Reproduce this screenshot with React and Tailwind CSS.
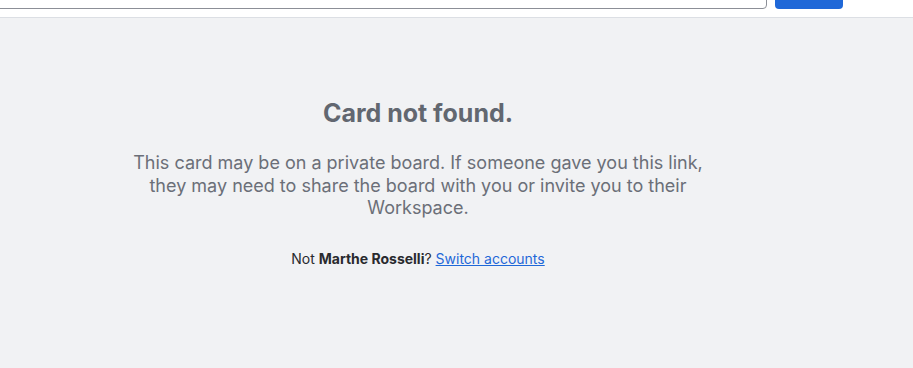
import React from 'react';

export default function App() {
    return (
        <div className="w-[913px] h-[368px] overflow-hidden bg-[#f1f2f4] font-['Inter',sans-serif]">
            {/* Header, scrolled partly out of view */}
            <div className="h-[18px] bg-white border-b border-[#dcdfe4] flex items-end pb-[8px] overflow-hidden">
                <div className="flex items-end gap-2">
                    <div className="-ml-3 w-[779px] h-[36px] rounded-[4px] border border-[#8c8f97] bg-white" />
                    <div className="w-[68px] h-[36px] rounded-[4px] bg-[#1f68d8]" />
                </div>
            </div>

            {/* Body */}
            <div className="flex pr-[77px]">
                <div className="flex-1 flex flex-col items-center text-center pt-[80px]">
                    <h1 className="text-[25px] leading-[30px] font-bold text-[#626770]">Card not found.</h1>
                    <p className="mt-[24px] w-[580px] text-[18px] leading-[22.5px] text-[#6b6f78]">
                        This card may be on a private board. If someone gave you this link, they may need to share the board with you or invite you to their Workspace.
                    </p>
                    <p className="mt-[29px] text-[14px] leading-[20px] text-[#292a2e]">
                        Not <span className="font-bold">Marthe Rosselli</span>?{' '}
                        <a href="#" className="text-[#1f68d8] underline">Switch accounts</a>
                    </p>
                </div>
            </div>
        </div>
    );
}
